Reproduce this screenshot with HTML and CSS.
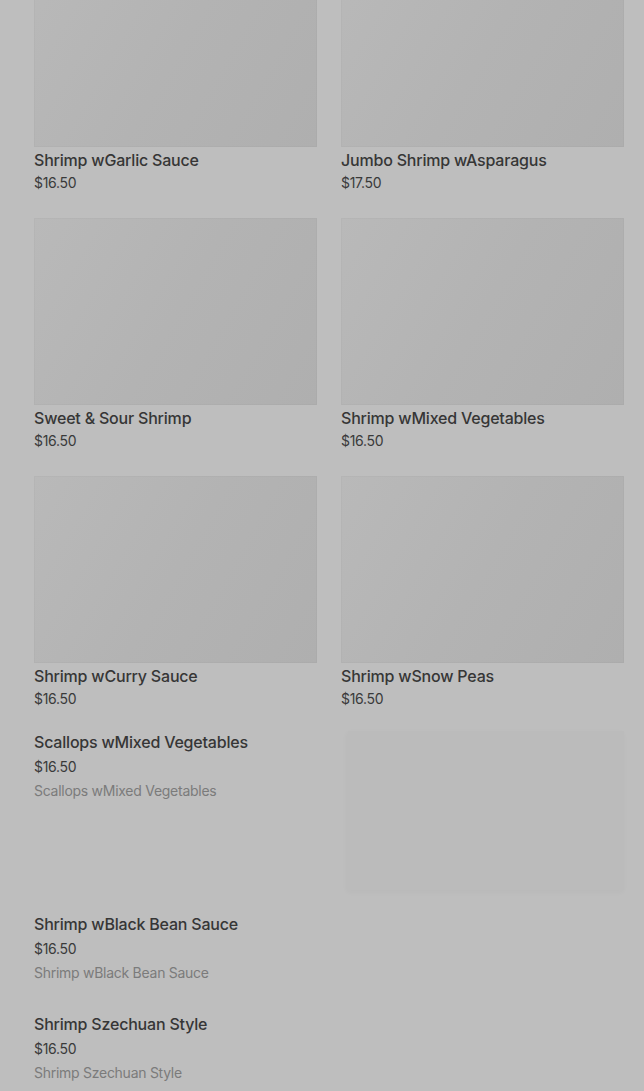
FILE: index.html
```html
<!DOCTYPE html>
<html lang="en">
<head>
  <meta charset="UTF-8" />
  <meta name="viewport" content="width=device-width, initial-scale=1.0">
  <title>Shrimp &amp; Seafood</title>
  <link rel="stylesheet" href="styles.css">
</head>
<body>
  <div class="page">
    <div class="cards">
      <div class="card">
        <div class="card-image"></div>
        <h3 class="item-title">Shrimp wGarlic Sauce</h3>
        <p class="item-price">$16.50</p>
      </div>
      <div class="card">
        <div class="card-image"></div>
        <h3 class="item-title">Jumbo Shrimp wAsparagus</h3>
        <p class="item-price">$17.50</p>
      </div>
      <div class="card">
        <div class="card-image"></div>
        <h3 class="item-title">Sweet &amp; Sour Shrimp</h3>
        <p class="item-price">$16.50</p>
      </div>
      <div class="card">
        <div class="card-image"></div>
        <h3 class="item-title">Shrimp wMixed Vegetables</h3>
        <p class="item-price">$16.50</p>
      </div>
      <div class="card">
        <div class="card-image"></div>
        <h3 class="item-title">Shrimp wCurry Sauce</h3>
        <p class="item-price">$16.50</p>
      </div>
      <div class="card">
        <div class="card-image"></div>
        <h3 class="item-title">Shrimp wSnow Peas</h3>
        <p class="item-price">$16.50</p>
      </div>
    </div>

    <div class="list">
      <div class="list-item">
        <div class="list-text">
          <h3 class="item-title">Scallops wMixed Vegetables</h3>
          <p class="item-price">$16.50</p>
          <p class="item-desc">Scallops wMixed Vegetables</p>
        </div>
        <div class="list-image"></div>
      </div>
      <div class="list-item">
        <div class="list-text">
          <h3 class="item-title">Shrimp wBlack Bean Sauce</h3>
          <p class="item-price">$16.50</p>
          <p class="item-desc">Shrimp wBlack Bean Sauce</p>
        </div>
      </div>
      <div class="list-item">
        <div class="list-text">
          <h3 class="item-title">Shrimp Szechuan Style</h3>
          <p class="item-price">$16.50</p>
          <p class="item-desc">Shrimp Szechuan Style</p>
        </div>
      </div>
    </div>
  </div>
</body>
</html>
```

FILE: styles.css
```css
body {
  font-family: Inter, 'Noto Sans', sans-serif;
  background-color: #bebebe;
  margin: 0;
  padding: 0;
  color: #363636;
  overflow: hidden;
}

.page {
  padding: 0 20px 0 34px;
  margin-top: -40px;
}

.cards {
  display: grid;
  grid-template-columns: 1fr 1fr;
  column-gap: 24px;
  row-gap: 25px;
}

.card-image {
  height: 187px;
  background: linear-gradient(120deg, #b9b9b9 0%, #b3b3b3 50%, #afafaf 100%);
  box-shadow: inset 0 0 0 1px rgba(0, 0, 0, 0.02);
}

.item-title {
  margin: 3px 0 0;
  font-size: 16px;
  line-height: 20px;
  font-weight: 500;
  letter-spacing: -0.2px;
  color: #363636;
}

.item-price {
  margin: 3px 0 0;
  font-size: 14px;
  line-height: 20px;
  letter-spacing: -0.3px;
  color: #3a3a3a;
}

.list {
  display: flex;
  flex-direction: column;
  gap: 23px;
  margin-top: 22px;
}

.list-item {
  display: flex;
  justify-content: space-between;
}

.list-text {
  padding: 1px 0 7px;
}

.list-text .item-title {
  margin: 0;
}

.list-text .item-price {
  margin-top: 5px;
}

.item-desc {
  margin: 4px 0 0;
  font-size: 14px;
  line-height: 20px;
  letter-spacing: -0.27px;
  color: #7b7b7b;
}

.list-image {
  width: 276px;
  height: 159px;
  background: #bbbbbb;
  box-shadow: -1px 2px 6px rgba(0, 0, 0, 0.03);
}
```
